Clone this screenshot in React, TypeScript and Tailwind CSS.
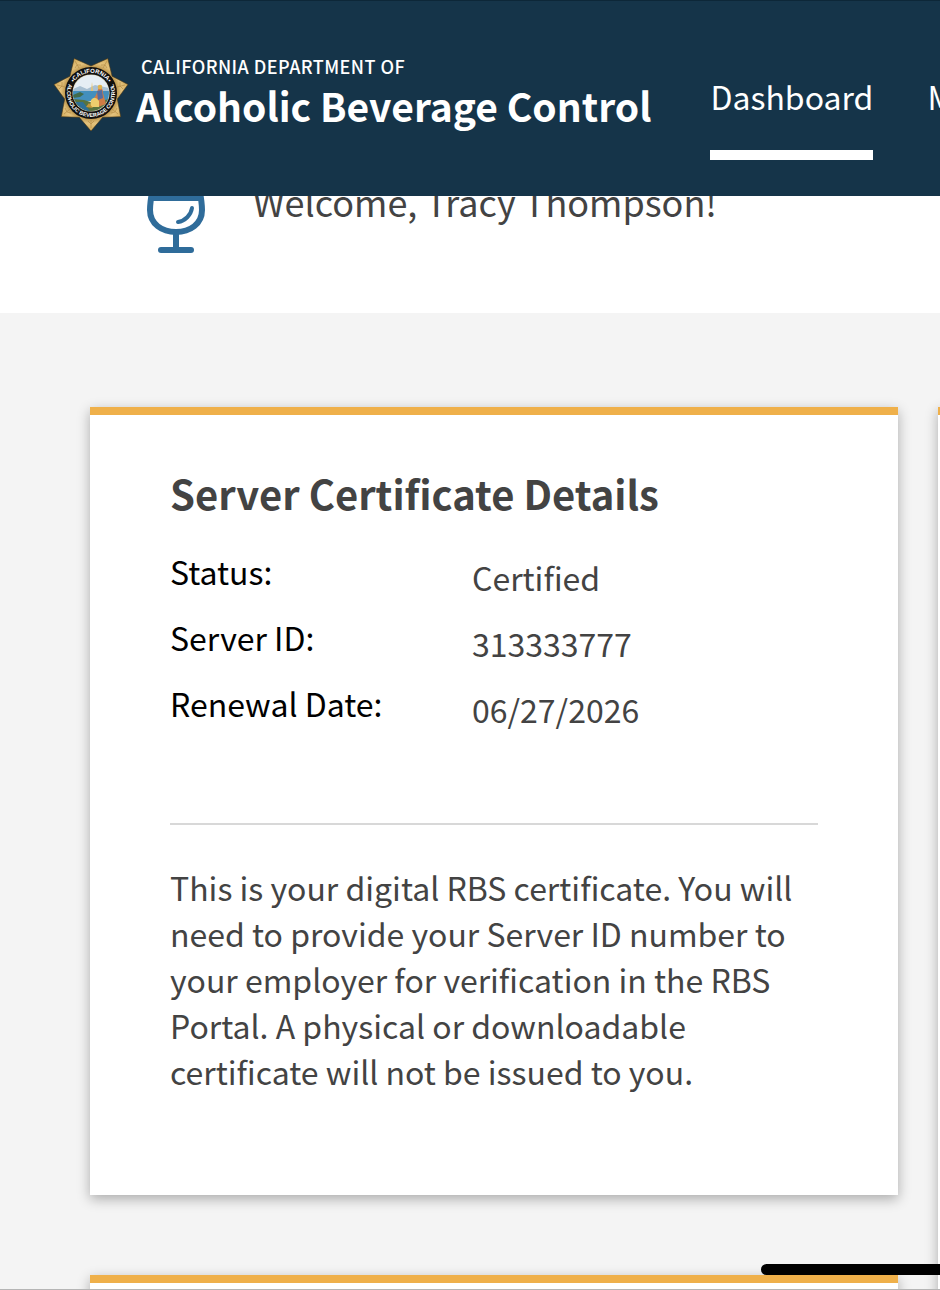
const details = [
  { label: "Status:", value: "Certified" },
  { label: "Server ID:", value: "313333777" },
  { label: "Renewal Date:", value: "06/27/2026" },
];

function Seal() {
  return (
    <svg viewBox="0 0 100 100" className="w-[100px] h-[100px] shrink-0" aria-hidden="true">
      <defs>
        <radialGradient id="gold" gradientUnits="userSpaceOnUse" cx="51" cy="48" r="38">
          <stop offset="0.65" stopColor="#b58d42" />
          <stop offset="0.8" stopColor="#e3c27d" />
          <stop offset="1" stopColor="#d3ab5a" />
        </radialGradient>
        <clipPath id="scene">
          <circle cx="51" cy="48" r="18" />
        </clipPath>
        <path id="ringTop" d="M30.8 48 A20.2 20.2 0 0 1 71.2 48" />
        <path id="ringBottom" d="M30.2 36 A24 24 0 1 0 71.8 36" />
      </defs>
      <path
        d="M51 86 L39.3 72.3 L21.3 71.7 L24.7 54 L14 39.5 L29.9 31.2 L34.2 13.5 L51 21 L67.8 13.5 L72.1 31.2 L88 39.5 L77.3 54 L80.7 71.7 L62.7 72.3 Z"
        fill="url(#gold)"
        stroke="#4b3714"
        strokeWidth="0.6"
      />
      <g stroke="#b48d46" strokeWidth="0.7" fill="none">
        <path d="M51 75 V83 M48 76 l3 3 l3 -3" />
        <path d="M30 64 l-6 5 M25 63 l2 4 l4 1" />
        <path d="M72 64 l6 5 M77 63 l-2 4 l-4 1" />
        <path d="M25 42 l-8 -2 M22 37 l0 4 l-3 3" />
        <path d="M77 42 l8 -2 M80 37 l0 4 l3 3" />
        <path d="M39 23 l-4 -7 M35 23 l2 -3 l4 0" />
        <path d="M63 23 l4 -7 M67 23 l-2 -3 l-4 0" />
      </g>
      <circle cx="51" cy="48" r="26" fill="#11100f" />
      <circle cx="51" cy="48" r="18.6" fill="#d9cfae" />
      <g clipPath="url(#scene)">
        <rect x="33" y="30" width="36" height="36" fill="#e6eef4" />
        <path d="M33 44 L40 41 L47 44 L55 40 L69 43 V50 H33 Z" fill="#a9c0d2" />
        <rect x="33" y="46" width="36" height="10" fill="#438fbd" />
        <path d="M33 50 L40 47 L44 49 L40 52 L33 53 Z" fill="#416b4b" />
        <path d="M33 54 L44 55 L54 58 L69 54 V66 H33 Z" fill="#58733f" />
        <path d="M34 57 L43 57 L50 66 H38 Z" fill="#2f6f95" />
        <path d="M52 37 l1 9 h-2 Z" fill="#e9c36c" />
        <path d="M59 42 q4 0 4 6 l3 11 l-8 3 l-7 -4 l5 -8 Z" fill="#cf7c46" />
        <path d="M57 46 l5 -1 l1 8 l-5 2 Z" fill="#536da2" />
        <circle cx="60" cy="42" r="2.3" fill="#e0b34d" />
        <path d="M51 55 q4 -5 8 1 l0 6 l-9 0 Z" fill="#edcd6d" />
        <path d="M46 62 l3 -4 l4 5 Z" fill="#c49539" />
      </g>
      <g fill="#ffffff" fontFamily="Liberation Sans, sans-serif" fontWeight="700" textAnchor="middle">
        <text fontSize="6">
          <textPath href="#ringTop" startOffset="50%">
            •CALIFORNIA•
          </textPath>
        </text>
        <text fontSize="5.5">
          <textPath href="#ringBottom" startOffset="50%">
            ALCOHOLIC BEVERAGE CONTROL
          </textPath>
        </text>
      </g>
    </svg>
  );
}

function GlassIcon() {
  return (
    <svg viewBox="0 0 80 100" className="w-20 h-[100px] shrink-0" fill="none" aria-hidden="true">
      <path
        d="M19 8 H61 C61 22 66 36 66 50 C66 64 54 72 40 72 C26 72 14 64 14 50 C14 36 19 22 19 8 Z"
        stroke="#2f6c9a"
        strokeWidth="6"
      />
      <path d="M15 38 H65" stroke="#2f6c9a" strokeWidth="6" />
      <path d="M56 48 C55 55 49 61 42 62" stroke="#2f6c9a" strokeWidth="4" strokeLinecap="round" />
      <path d="M40 72 V89" stroke="#2f6c9a" strokeWidth="6" />
      <path d="M25 90 H55" stroke="#2f6c9a" strokeWidth="6" strokeLinecap="round" />
    </svg>
  );
}

function Header() {
  return (
    <header className="fixed inset-x-0 top-0 z-20 h-[196px] bg-[#153449] border-t border-[#0d2738] text-white overflow-hidden">
      <div className="flex items-start pl-10">
        <a href="#home" className="flex shrink-0 pt-11">
          <Seal />
          <span className="block pt-1.5 whitespace-nowrap">
            <span className="block pl-px text-[18px] leading-[30px] font-medium tracking-wide">
              CALIFORNIA DEPARTMENT OF
            </span>
            <span className="block -ml-1 text-[39px] leading-[48px] font-bold">
              Alcoholic Beverage Control
            </span>
          </span>
        </a>
        <nav className="ml-[59px] flex shrink-0 gap-[54px] pt-[68px] text-[32px] leading-[54px] whitespace-nowrap">
          <a href="#dashboard" className="border-b-10 border-white pb-[27px]">
            Dashboard
          </a>
          <a href="#profile" className="pb-[27px]">
            My Profile
          </a>
        </nav>
      </div>
    </header>
  );
}

function CertificateCard() {
  return (
    <article className="border-t-8 border-[#efb04a] bg-white px-20 pt-12 pb-[101px] shadow-[0_4px_12px_rgba(0,0,0,0.3)]">
      <h2 className="text-[40px] leading-[60px] font-bold text-[#434343]">
        Server Certificate Details
      </h2>
      <dl className="mt-[15px] border-b-2 border-[#d8d8d8] pb-[87px]">
        {details.map((item) => (
          <div key={item.label} className="grid grid-cols-[302px_1fr] h-[66px]">
            <dt className="leading-[66px] text-black">{item.label}</dt>
            <dd className="pt-3 leading-[54px] text-[#434343]">{item.value}</dd>
          </div>
        ))}
      </dl>
      <p className="mt-[39px] text-[#434343] leading-[46px]">
        This is your digital RBS certificate. You will need to provide your Server ID number to
        your employer for verification in the RBS Portal. A physical or downloadable certificate
        will not be issued to you.
      </p>
    </article>
  );
}

function EmptyCard({ tall = false }: { tall?: boolean }) {
  return (
    <article
      className={`min-h-[400px] border-t-8 border-[#efb04a] bg-white shadow-[0_4px_12px_rgba(0,0,0,0.3)] ${
        tall ? "row-span-2" : ""
      }`}
    />
  );
}

export default function App() {
  return (
    <div className="h-screen overflow-hidden bg-[#f4f4f4] font-['Noto_Sans_CJK_SC',sans-serif] text-[32px]">
      <Header />
      <main>
        <section className="flex bg-white pt-40 pb-[53px] pl-[136px]">
          <GlassIcon />
          <h1 className="pl-[37px] pt-3.5 text-[36px] leading-[54px] text-[#434343]">
            Welcome, Tracy Thompson!
          </h1>
        </section>
        <section className="grid grid-cols-[calc(100%-42px)_calc(100%-42px)] gap-x-10 gap-y-20 pl-[90px] pt-[94px]">
          <CertificateCard />
          <EmptyCard tall />
          <EmptyCard />
        </section>
      </main>
      <div className="fixed bottom-[15px] right-0 z-10 h-[11px] w-[179px] rounded-l-full bg-black" />
      <div className="fixed inset-x-0 bottom-0 z-10 h-px bg-[#b5b5b5]" />
    </div>
  );
}
